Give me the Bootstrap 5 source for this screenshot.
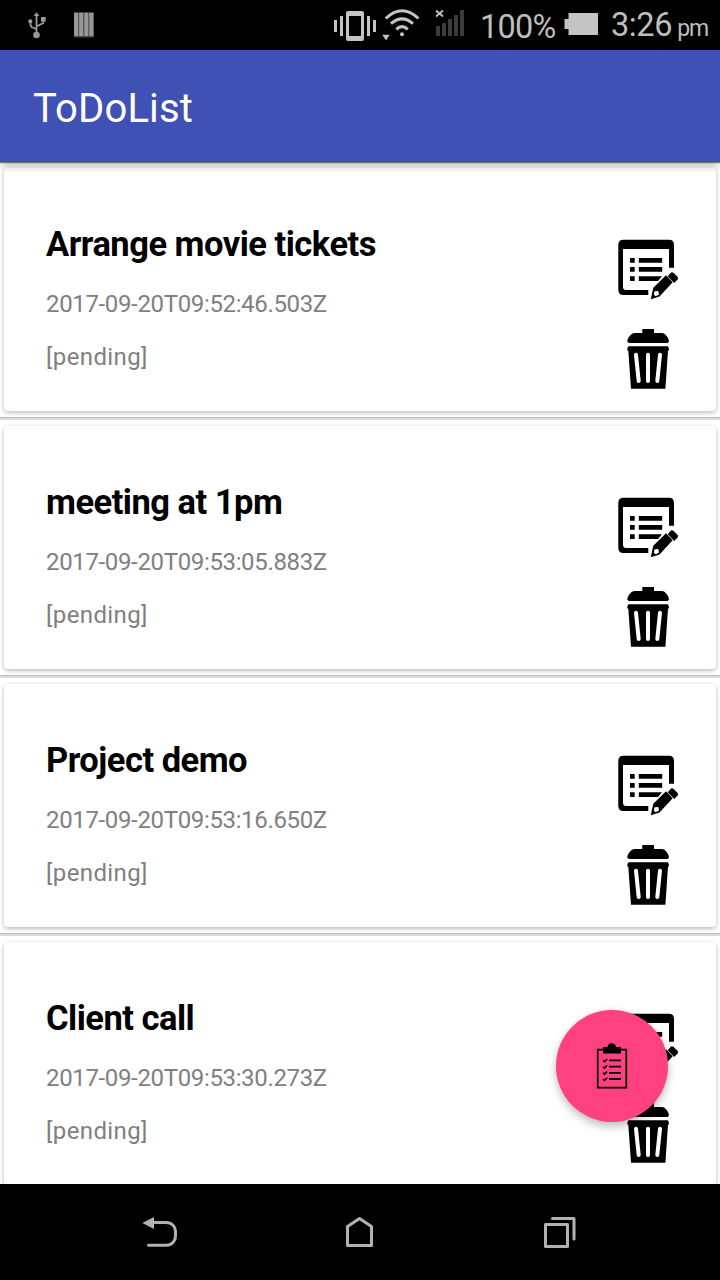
<!DOCTYPE html>
<html lang="en">
<head>
<meta charset="utf-8">
<meta name="viewport" content="width=device-width, initial-scale=1">
<title>ToDoList</title>
<link href="https://cdn.jsdelivr.net/npm/bootstrap@5.3.0/dist/css/bootstrap.min.css" rel="stylesheet">
<style>
  body { font-family: Roboto, sans-serif; background: #000; }
  svg { display: block; flex: none; }
  .phone { width: 720px; height: 1280px; }
  .status-bar { height: 50px; background: #000; color: #bebebe; padding-right: 12px; }
  .status-bar .pct, .status-bar .clock { font-size: 32.5px; line-height: 50px; padding-top: 3px; font-weight: 400; }
  .status-bar .pct { width: 84px; letter-spacing: -.8px; }
  .status-bar .clock { letter-spacing: -.4px; width: 97px; padding-top: 4px; }
  .status-bar .ampm { font-size: 23px; letter-spacing: -1.2px; }
  .app-bar { height: 112px; background: #3f51b5; z-index: 2; padding: 6px 33px 0; box-shadow: 0 1px 1px rgba(0,0,0,.45), 0 3px 9px rgba(0,0,0,.3); }
  .app-title { font-size: 40px; line-height: 48px; letter-spacing: .15px; }
  .todo-list { min-height: 0; background: #fff; }
  .todo-row { height: 258px; padding: 6px 4px; border-bottom: 2px solid #dcdcdc; background: linear-gradient(#bcbcbc,#bcbcbc) bottom / 100% 1px no-repeat; }
  .todo-card { height: 243px; border: 0; border-radius: 4px; box-shadow: 0 2px 4px rgba(0,0,0,.22), 0 0 4px rgba(0,0,0,.08); padding: 0 36px 0 42px; }
  .todo-title { font-size: 34.5px; line-height: 40px; font-weight: 700; color: #000; margin: 56px 0 0; letter-spacing: -.5px; }
  .todo-meta { font-size: 24px; line-height: 28px; color: #808080; }
  .todo-date { margin-top: 26px; letter-spacing: -.35px; }
  .todo-state { margin-top: 25px; letter-spacing: .4px; }
  .todo-actions { padding-top: 70px; }
  .trash-icon { margin-top: 26px; }
  .fab { right: 52px; top: -174px; width: 112px; height: 112px; background: #ff4081; border: 0; z-index: 3; padding: 0; box-shadow: 0 5px 10px rgba(0,0,0,.22), 0 0 5px rgba(0,0,0,.1); }
  .nav-keys { height: 96px; background: #000; }
</style>
</head>
<body>
<svg width="0" height="0" class="position-absolute" aria-hidden="true">
  <symbol id="edit" viewBox="16 13 64 64">
    <path d="M23.5 14.7H69Q74 14.7 74 20V42.7H69V24H23V61.5Q23 65 26 65H48.3V70H23.5Q18.3 70 18.3 64.5V20Q18.3 14.7 23.5 14.7Z"/>
    <path d="M30 33h4.7v4.7H30zM38.8 33h23.4v4.7H38.8zM30 42h4.7v4.7H30zM38.8 42h23.4v4.7H38.8zM30 51.3h4.7V56H30zM38.8 51.3H62L58 56H38.8z"/>
    <path d="M50.8 74.2 53.3 62.7 66 50.3 72.7 57.2 59.5 71.5Z"/>
    <path d="M54.6 66.3 58.2 66 59.2 69.5 55.6 71.2 53.8 69.5Z" fill="#fff"/>
    <path d="M67.7 51.2 71 47.6Q72.2 46.8 73.4 47.8L77.7 52Q78.3 53.2 77.7 54.2L74.3 58Z"/>
  </symbol>
  <symbol id="trash" viewBox="16 13 64 64">
    <path d="M42.3 14H54V18H62C65 18 69 23 69 26.5L67.5 28H28.8L27.3 26.5C27.3 23 31.5 18 34.5 18H42.3Z"/>
    <path d="M28.5 31.3H67.7Q69 32 69 35.5H68L65.4 73.8H31L28.3 35.5H27.2Q27.2 32 28.5 31.3Z"/>
    <path d="M36 39.7 38.7 66M48 39.7V66M60 39.7 57.3 66" fill="none" stroke="#fff" stroke-width="4" stroke-linecap="round"/>
  </symbol>
</svg>

<div class="phone d-flex flex-column position-relative overflow-hidden">
  <div class="status-bar d-flex align-items-center flex-shrink-0 text-nowrap">
    <svg width="480" height="50" viewBox="0 0 480 50">
      <g fill="#989898" stroke="#989898">
        <path d="M36.5 33V15M30.5 22V25L31.5 27L36.5 29.3M43.3 20V23L36.5 26.5" fill="none" stroke-width="1.8"/>
        <path d="M36.5 12.2 39.5 16H33.5Z" stroke="none"/>
        <circle cx="30.3" cy="21.3" r="2.1" stroke="none"/>
        <path d="M41 17h4.7v4.5H41z" stroke="none"/>
        <circle cx="36.5" cy="35" r="3.3" stroke="none"/>
      </g>
      <path d="M74 12.3H94V37.5H74Z" fill="#484848"/>
      <path d="M74 12.7h4.2V36H74zM79.2 12.7h4V36h-4zM84.3 12.7h4V36h-4zM89.3 12.7h4V36h-4z" fill="#979797"/>
      <g fill="#c4c4c4">
        <path d="M334 20h3v12h-3zM340 16h3v20h-3zM367 16h3v20h-3zM373 20h3v12h-3z"/>
        <path fill-rule="evenodd" d="M348 11H362Q364 11 364 13V39Q364 41 362 41H348Q346 41 346 39V13Q346 11 348 11ZM349 16V36H361V16Z"/>
        <path d="M382.3 34.7H389.7L386 40.5Z"/>
        <circle cx="402" cy="34.3" r="2"/>
      </g>
      <g fill="none" stroke="#c4c4c4" stroke-width="3">
        <path d="M385.7 18.5Q402 3 418.5 18.5M391 23.7Q402 14 413 23.7M396.3 29.3Q402 24 407.8 29.3"/>
        <path d="M436 10.5 443 16.5M443 10.5 436 16.5" stroke-width="1.8"/>
      </g>
      <path d="M436 26h4v10h-4zM442 23h4v13h-4zM448 19h4v17h-4zM454 15h4v21h-4zM460 10h4v26h-4z" fill="#3c3c3c"/>
    </svg>
    <span class="pct">100%</span>
    <svg width="47" height="50" viewBox="0 0 47 50"><path d="M4.5 13H34V35H4.5V29H.5V19H4.5Z" fill="#c4c4c4"/></svg>
    <span class="clock d-flex align-items-baseline justify-content-between"><span>3:26</span><span class="ampm">pm</span></span>
  </div>

  <header class="app-bar d-flex align-items-center flex-shrink-0 position-relative text-white">
    <span class="app-title">ToDoList</span>
  </header>

  <main class="todo-list flex-fill overflow-hidden">
    <div class="todo-row"><div class="card todo-card flex-row justify-content-between">
      <div><h2 class="todo-title">Arrange movie tickets</h2><div class="todo-meta todo-date">2017-09-20T09:52:46.503Z</div><div class="todo-meta todo-state">[pending]</div></div>
      <div class="todo-actions"><svg width="64" height="64"><use href="#edit"/></svg><svg class="trash-icon" width="64" height="64"><use href="#trash"/></svg></div>
    </div></div>
    <div class="todo-row"><div class="card todo-card flex-row justify-content-between">
      <div><h2 class="todo-title">meeting at 1pm</h2><div class="todo-meta todo-date">2017-09-20T09:53:05.883Z</div><div class="todo-meta todo-state">[pending]</div></div>
      <div class="todo-actions"><svg width="64" height="64"><use href="#edit"/></svg><svg class="trash-icon" width="64" height="64"><use href="#trash"/></svg></div>
    </div></div>
    <div class="todo-row"><div class="card todo-card flex-row justify-content-between">
      <div><h2 class="todo-title">Project demo</h2><div class="todo-meta todo-date">2017-09-20T09:53:16.650Z</div><div class="todo-meta todo-state">[pending]</div></div>
      <div class="todo-actions"><svg width="64" height="64"><use href="#edit"/></svg><svg class="trash-icon" width="64" height="64"><use href="#trash"/></svg></div>
    </div></div>
    <div class="todo-row"><div class="card todo-card flex-row justify-content-between">
      <div><h2 class="todo-title">Client call</h2><div class="todo-meta todo-date">2017-09-20T09:53:30.273Z</div><div class="todo-meta todo-state">[pending]</div></div>
      <div class="todo-actions"><svg width="64" height="64"><use href="#edit"/></svg><svg class="trash-icon" width="64" height="64"><use href="#trash"/></svg></div>
    </div></div>
  </main>

  <footer class="nav-keys position-relative flex-shrink-0">
    <svg width="720" height="96" viewBox="0 1184 720 96" fill="none" stroke="#b2b2b2" stroke-width="3" stroke-linecap="round" stroke-linejoin="round">
      <path d="M153 1222.5H166C172 1222.5 175.5 1227 175.5 1231V1236C175.5 1241 172 1245.3 166 1245.3H148.5"/>
      <path d="M142.3 1223 154 1217V1229Z" fill="#b2b2b2" stroke="none"/>
      <path d="M347.5 1226.5 359.5 1218.5 371.5 1226.5V1245.5H347.5Z"/>
      <path d="M545.5 1224.5H567.5V1246.5H545.5ZM552.5 1218.5H574V1239"/>
    </svg>
    <button class="btn fab rounded-circle position-absolute" aria-label="Add task">
      <svg width="112" height="112" viewBox="16 10 112 112">
        <path d="M57.7 49.7H86.3V87.7H57.7Z" fill="none" stroke="#000" stroke-width="1.7"/>
        <path d="M63 47H67.5Q68 43.3 71.7 43.3T76 47H81V53.5H63Z"/>
        <path d="M69 60.3H81M69 66.6H81M69 72.8H81M69 79H81" stroke="#000" stroke-width="1.8"/>
        <path d="M63 60.3 64.5 61.8 67.2 59M63 66.6 64.5 68.1 67.2 65.3M63 72.8 64.5 74.3 67.2 71.5M63 79 64.5 80.5 67.2 77.7" fill="none" stroke="#000" stroke-width="1.5"/>
      </svg>
    </button>
  </footer>
</div>
<script src="https://cdn.jsdelivr.net/npm/bootstrap@5.3.0/dist/js/bootstrap.bundle.min.js"></script>
</body>
</html>
